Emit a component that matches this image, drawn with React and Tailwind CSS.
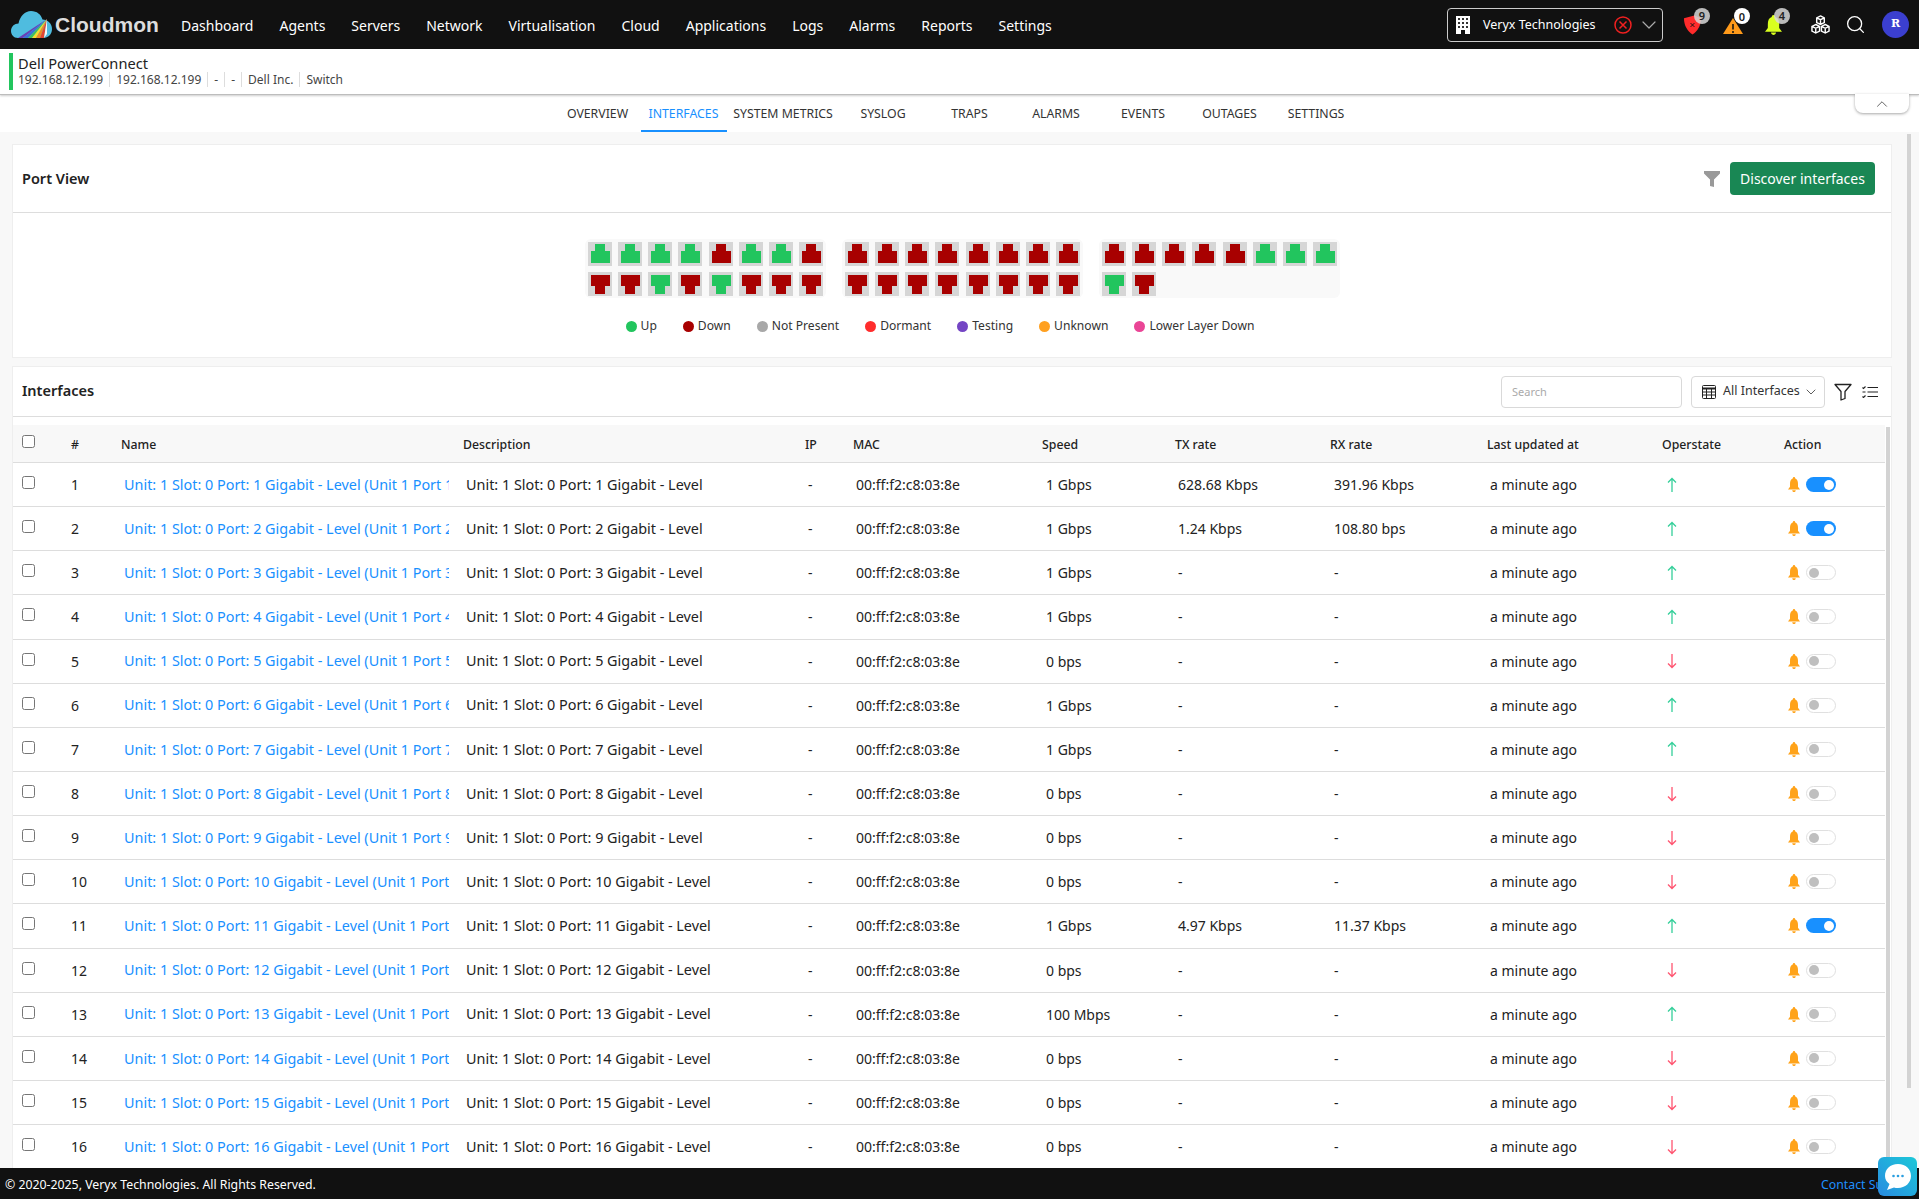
import React from "react";
import { Search, ChevronDown, ChevronUp } from "lucide-react";

const F = "font-['Noto_Sans','Liberation_Sans',sans-serif]";
const nav = ["Dashboard","Agents","Servers","Network","Virtualisation","Cloud","Applications","Logs","Alarms","Reports","Settings"];
const tabs = [["OVERVIEW","w-[86px]"],["INTERFACES","w-[86px]"],["SYSTEM METRICS","w-[113px]"],["SYSLOG","w-[87px]"],["TRAPS","w-[86px]"],["ALARMS","w-[87px]"],["EVENTS","w-[87px]"],["OUTAGES","w-[86px]"],["SETTINGS","w-[87px]"]];
const G = "#22c55e", R = "#a80000";
const up1 = [1,1,1,1,0,1,1,0], dn1 = [0,0,1,0,1,0,0,0];
const up2 = [0,0,0,0,0,0,0,0], dn2 = [0,0,0,0,0,0,0,0];
const up3 = [0,0,0,0,0,1,1,1], dn3 = [1,0];
const legend = [["Up","bg-[#22c55e]"],["Down","bg-[#a80000]"],["Not Present","bg-[#a8a8a8]"],["Dormant","bg-[#ff2d2d]"],["Testing","bg-[#7445c4]"],["Unknown","bg-[#ffa020]"],["Lower Layer Down","bg-[#ea4596]"]];
const cols = "grid grid-cols-[58px_50px_342px_342px_48px_189px_133px_155px_157px_175px_122px_101px] items-center";
const rows = [
  [1,"1 Gbps","628.68 Kbps","391.96 Kbps",1,1],[2,"1 Gbps","1.24 Kbps","108.80 bps",1,1],[3,"1 Gbps","-","-",1,0],[4,"1 Gbps","-","-",1,0],
  [5,"0 bps","-","-",0,0],[6,"1 Gbps","-","-",1,0],[7,"1 Gbps","-","-",1,0],[8,"0 bps","-","-",0,0],[9,"0 bps","-","-",0,0],[10,"0 bps","-","-",0,0],
  [11,"1 Gbps","4.97 Kbps","11.37 Kbps",1,1],[12,"0 bps","-","-",0,0],[13,"100 Mbps","-","-",1,0],[14,"0 bps","-","-",0,0],[15,"0 bps","-","-",0,0],[16,"0 bps","-","-",0,0],
];

function Port({ up, on }) {
  return (
    <div className="w-[24px] h-[24px] bg-[#d6d6d6]">
      <svg viewBox="0 0 24 24" className="w-full h-full" shapeRendering="crispEdges">
        <polygon fill={on ? G : R} points={up ? "7,2 17,2 17,9 22,9 22,21 3,21 3,9 7,9" : "3,3 22,3 22,14 17,14 17,22 7,22 7,14 3,14"} />
      </svg>
    </div>
  );
}
function Group({ top, bottom }) {
  return (
    <div className="w-[241px] h-[59px] bg-[#f9f9f9] rounded-[6px] p-[3px] flex flex-col gap-[6px]">
      <div className="flex gap-[6.2px]">{top.map((v,i)=><Port key={i} up on={v}/>)}</div>
      <div className="flex gap-[6.2px]">{bottom.map((v,i)=><Port key={i} up={false} on={v}/>)}</div>
    </div>
  );
}
function Logo() {
  return (
    <svg viewBox="0 0 41 27" className="w-[41px] h-[27px] shrink-0">
      <path d="M7 27 C2.500 27 0 23.500 0 20 C0 15.500 3.500 12.500 7.500 12.500 C9 5 14 0 20 0 C26 0 30 3.500 31.500 8.500 C36.500 8.500 41 12.500 41 18 C41 23.500 37 27 32.500 27 Z" fill="#4fbcdf"/>
      <polygon points="7,27 36,8 12,27" fill="#6a3fb5"/>
      <polygon points="12,27 36,8 17,27" fill="#3a6fd6"/>
      <polygon points="17,27 36,8 21,27" fill="#3fbf5f"/>
      <polygon points="21,27 36,8 25,27" fill="#f2e02c"/>
      <polygon points="25,27 36,8 29,27" fill="#f08a24"/>
      <polygon points="29,27 36,8 33,27" fill="#e3452f"/>
      <polygon points="33,27 36,8 36,23" fill="#f7f7f7"/>
    </svg>
  );
}
function Badge({ n, cls }) {
  return <span className={`absolute -top-[7px] -right-[8px] w-[16px] h-[16px] rounded-full flex items-center justify-center text-[11px] font-semibold text-[#222] leading-none ${cls}`}>{n}</span>;
}
function Cell({ children, cls = "" }) {
  return <div className={`pl-[3px] text-[#222] whitespace-nowrap overflow-hidden ${cls || "text-[14px]"}`}>{children}</div>;
}
function Toggle({ on }) {
  return on ? (
    <span className="w-[30px] h-[15px] rounded-full bg-[#1890ff] flex items-center justify-end pr-[2px]"><span className="w-[10px] h-[10px] rounded-full bg-white"/></span>
  ) : (
    <span className="w-[30px] h-[15px] rounded-full bg-white border border-[#e0e0e0] flex items-center pl-[2px]"><span className="w-[10px] h-[10px] rounded-full bg-[#bfbfbf]"/></span>
  );
}
function Bell({ w = 12, h = 15, color = "#ffa31a" }) {
  return (
    <svg viewBox="0 0 24 24" width={w} height={h} fill={color} preserveAspectRatio="none">
      <path d="M12 0 C13.500 0 14.500 1 14.500 2.500 C18.500 3.500 20 7 20 11 L20 15.500 L24 20 L0 20 L4 15.500 L4 11 C4 7 5.500 3.500 9.500 2.500 C9.500 1 10.500 0 12 0 Z"/>
      <path d="M8.500 21 L15.500 21 C15.500 23 13.500 24 12 24 C10.500 24 8.500 23 8.500 21 Z"/>
    </svg>
  );
}
function Arrow({ up }) {
  return (
    <svg viewBox="0 0 12 16" width="12" height="16" fill="none" stroke={up ? "#35cf9a" : "#ff5470"} strokeWidth="1.300" className="ml-[4px]">
      {up ? <path d="M6 15 V1.500 M2 5.500 L6 1.500 L10 5.500"/> : <path d="M6 1 V14.500 M2 10.500 L6 14.500 L10 10.500"/>}
    </svg>
  );
}
function Check() {
  return <input type="checkbox" className="w-[13px] h-[13px]"/>;
}

export default function App() {
  return (
    <div className={`${F} relative h-[1199px] overflow-hidden flex flex-col bg-white text-[#222]`}>
      <header className="h-[49px] shrink-0 bg-[#111111] flex items-center text-white">
        <div className="flex items-center pl-[11px] w-[181px] shrink-0 -mt-[1px]">
          <Logo/>
          <span className="font-['Liberation_Sans',sans-serif] text-[21px] font-bold text-[#dddddd] leading-none ml-[3px]">Cloudmon</span>
        </div>
        <nav className="flex gap-[26px] text-[14px] pt-[1px]">
          {nav.map(n=><span key={n}>{n}</span>)}
        </nav>
        <div className="ml-auto flex items-center pr-[10px]">
          <div className="w-[216px] h-[34px] border border-[#cccccc] rounded-[4px] flex items-center pl-[8px] pr-[1px]">
            <svg viewBox="0 0 14 18" className="w-[14px] h-[18px]"><path d="M0 0H14V18H9V14H5V18H0Z" fill="#fff"/><g fill="#333"><rect x="2" y="2" width="2" height="2"/><rect x="6" y="2" width="2" height="2"/><rect x="10" y="2" width="2" height="2"/><rect x="2" y="6" width="2" height="2"/><rect x="6" y="6" width="2" height="2"/><rect x="10" y="6" width="2" height="2"/><rect x="2" y="10" width="2" height="2"/><rect x="6" y="10" width="2" height="2"/><rect x="10" y="10" width="2" height="2"/></g></svg>
            <span className="ml-[13px] text-[12.5px] pt-[2px]">Veryx Technologies</span>
            <svg viewBox="0 0 18 18" className="w-[18px] h-[18px] ml-auto" fill="none" stroke="#f02020" strokeWidth="1.500"><circle cx="9" cy="9" r="8"/><path d="M5.500 5.500 L12.500 12.500 M12.500 5.500 L5.500 12.500"/></svg>
            <ChevronDown size={24} strokeWidth={1.200} className="text-[#aaaaaa] ml-[5px]"/>
          </div>
          <div className="relative ml-[20px] w-[19px] h-[20px]">
            <svg viewBox="0 0 20 20" className="w-[19px] h-[20px]"><path d="M1 3 L12 0 L19 3 C19 11 15 17 10 20 C5 17 1 11 1 3 Z" fill="#ff2b2b"/><path d="M8 8 L12 12 M12 8 L8 12" stroke="#111" strokeWidth="1"/></svg>
            <Badge n="9" cls="bg-[#d8d8d8]/85"/>
          </div>
          <div className="relative ml-[21px] w-[20px] h-[18px] mt-[3px]">
            <svg viewBox="0 0 20 18" className="w-[20px] h-[18px]"><path d="M10 1 L20 17 H0 Z" fill="#ff9a1a"/><path d="M10 7 V12.500 M10 14 V16" stroke="#111" strokeWidth="1.500"/></svg>
            <span className="absolute -top-[9px] -right-[7px] w-[16px] h-[16px] rounded-full flex items-center justify-center text-[11px] font-semibold text-[#222] leading-none bg-white">0</span>
          </div>
          <div className="relative ml-[22px] w-[17px] h-[20px] flex">
            <Bell w={17} h={20} color="#d9ff1f"/>
            <Badge n="4" cls="bg-[#d8d8d8]/85"/>
          </div>
          <svg viewBox="0 0 20 20" className="w-[19px] h-[19px] ml-[29px]" fill="none" stroke="#fff" strokeWidth="1.500"><path d="M10 1 L14 3 V8 L10 10 L6 8 V3 Z M6 3 L10 5 L14 3 M10 5 V10"/><path d="M5 10 L9 12 V17 L5 19 L1 17 V12 Z M1 12 L5 14 L9 12 M5 14 V19"/><path d="M15 10 L19 12 V17 L15 19 L11 17 V12 Z M11 12 L15 14 L19 12 M15 14 V19"/></svg>
          <Search size={21} strokeWidth={1.500} className="ml-[15px]"/>
          <span className="ml-[16px] w-[27px] h-[27px] rounded-full bg-[#3b3fcf] flex items-center justify-center text-[11px] font-bold font-['DejaVu_Serif',serif]">R</span>
        </div>
      </header>

      <div className="relative h-[46px] shrink-0 bg-white border-b border-[#bdbdbd] shadow-[0_1px_2px_rgba(0,0,0,0.2)] flex items-center pl-[9px] z-10">
        <span className="w-[4px] h-[37px] bg-[#22c55e]"/>
        <div className="ml-[5px] -mt-[3px]">
          <div className="text-[14.6px] leading-[18px] text-[#222]">Dell PowerConnect</div>
          <div className="flex text-[12px] leading-[15px] text-[#444]">
            <span className="pr-[6px]">192.168.12.199</span>
            <span className="px-[6px] border-l border-[#dddddd]">192.168.12.199</span>
            <span className="px-[6px] border-l border-[#dddddd]">-</span>
            <span className="px-[6px] border-l border-[#dddddd]">-</span>
            <span className="px-[6px] border-l border-[#dddddd]">Dell Inc.</span>
            <span className="px-[6px] border-l border-[#dddddd]">Switch</span>
          </div>
        </div>
        <div className="absolute right-[10px] top-[45px] w-[54px] h-[19px] bg-white rounded-b-[8px] shadow-[0_1px_3px_rgba(0,0,0,0.35)] flex items-center justify-center">
          <ChevronUp size={18} strokeWidth={1.100} className="text-[#444]"/>
        </div>
      </div>

      <div className="h-[37px] shrink-0 bg-white flex justify-center pr-[5px]">
        {tabs.map(([t,w],i)=>(
          <div key={t} className={`${w} flex items-center justify-center text-[12.3px] ${i===1 ? "pt-[3px] text-[#1890ff] border-b-2 border-[#1890ff]" : "pt-[1px] text-[#333]"}`}>{t}</div>
        ))}
      </div>

      <main className="flex-1 min-h-0 bg-[#f8f8f8] pl-[12px] pr-[27px] pt-[12px] overflow-hidden relative">
        <section className="bg-white border border-[#eeeeee] h-[214px]">
          <div className="h-[68px] border-b border-[#dddddd] flex items-center pl-[9px] pr-[16px]">
            <h2 className="text-[14.5px] font-semibold text-[#222]">Port View</h2>
            <svg viewBox="0 0 16 16" className="w-[16px] h-[16px] ml-auto"><path d="M0 0H16V2.500L10 8.500V16L6 15V8.500L0 2.500Z" fill="#999999"/></svg>
            <button className="ml-[10px] w-[145px] h-[33px] bg-[#198754] rounded-[4px] text-white text-[14px]">Discover interfaces</button>
          </div>
          <div className="flex justify-center gap-[16px] pt-[26px] pl-[21px]">
            <Group top={up1} bottom={dn1}/>
            <Group top={up2} bottom={dn2}/>
            <Group top={up3} bottom={dn3}/>
          </div>
          <div className="flex justify-center gap-[26px] pt-[19px] pr-[24px] text-[12.1px] text-[#333]">
            {legend.map(([t,c])=>(
              <span key={t} className="flex items-center gap-[4px]"><span className={`w-[11px] h-[11px] rounded-full ${c}`}/>{t}</span>
            ))}
          </div>
        </section>

        <section className="mt-[8px] bg-white border border-[#eeeeee] h-[900px] relative">
          <div className="h-[50px] border-b border-[#dddddd] flex items-center pl-[9px]">
            <h2 className="text-[14.5px] font-semibold text-[#222] -mt-[2px]">Interfaces</h2>
            <input placeholder="Search" className="ml-auto w-[181px] h-[32px] border border-[#d9d9d9] rounded-[4px] pl-[10px] text-[11px] placeholder:text-[#aaaaaa] bg-white outline-none"/>
            <div className="ml-[9px] w-[134px] h-[32px] border border-[#d9d9d9] rounded-[4px] flex items-center pl-[10px] text-[12.5px] text-[#333]">
              <svg viewBox="0 0 14 14" className="w-[14px] h-[14px] shrink-0" fill="none" stroke="#222" strokeWidth="1"><rect x="0.500" y="0.500" width="13" height="13" rx="1" /><path d="M0.500 3.500H13.500" strokeWidth="2"/><path d="M0.500 7H13.500M0.500 10H13.500M4.500 3V13.500M9.500 3V13.500"/></svg>
              <span className="ml-[7px] whitespace-nowrap">All Interfaces</span>
              <ChevronDown size={16} strokeWidth={1.200} className="ml-[3px] shrink-0"/>
            </div>
            <svg viewBox="0 0 18 18" className="w-[18px] h-[18px] ml-[9px]" fill="none" stroke="#222" strokeWidth="1.300"><path d="M1 1.500H17L11 8.500V15.500L7 17V8.500Z" strokeLinejoin="round"/></svg>
            <svg viewBox="0 0 16 12" className="w-[16px] h-[12px] ml-[10px] mr-[13px]" fill="none" stroke="#222" strokeWidth="1.100"><path d="M5.500 1.500H16M5.500 6H16M5.500 10.500H16"/><path d="M0.500 1.500L1.500 2.500L3.500 0.500M0.500 6H3.500M0.500 10.500L1.500 11.500L3.500 9.500"/></svg>
          </div>
          <div className="mt-[8px] w-[1872px]">
            <div className={`${cols} h-[38px] bg-[#f8f8f8] border-b border-[#dddddd] text-[12.3px] font-medium text-[#222]`}>
              <div className="pl-[9px] flex items-center -mt-[5px]"><Check/></div>
              {["#","Name","Description","IP","MAC","Speed","TX rate","RX rate","Last updated at","Operstate","Action"].map(h=><div key={h} className="pt-[3px]">{h}</div>)}
            </div>
            {rows.map(([n,s,tx,rx,up,on])=>(
              <div key={n} className={`${cols} h-[44.15px] border-b border-[#dddddd]`}>
                <div className="pl-[9px] flex items-center -mt-[4px]"><Check/></div>
                <div className="text-[14px] text-[#222]">{n}</div>
                <Cell cls="text-[14.4px] text-[#1890ff]! w-[328px]">{`Unit: 1 Slot: 0 Port: ${n} Gigabit - Level (Unit 1 Port ${n})`}</Cell>
                <Cell cls="text-[14.4px]">{`Unit: 1 Slot: 0 Port: ${n} Gigabit - Level`}</Cell>
                <Cell>-</Cell>
                <Cell>00:ff:f2:c8:03:8e</Cell>
                <Cell cls="text-[14px] pl-[4px]!">{s}</Cell>
                <Cell>{tx}</Cell>
                <Cell cls="text-[14px] pl-[4px]!">{rx}</Cell>
                <Cell>a minute ago</Cell>
                <div className="flex items-center"><Arrow up={up}/></div>
                <div className="flex items-center pl-[4px] gap-[6px]"><Bell/><Toggle on={on}/></div>
              </div>
            ))}
          </div>
          <div className="absolute left-[1873px] top-[60px] bottom-0 w-[4px] bg-[#d3d3d3]"/>
        </section>
        <div className="absolute right-[8px] top-[2px] w-[4px] h-[954px] bg-[#d3d3d3]"/>
      </main>

      <footer className="h-[31px] shrink-0 bg-[#111111] flex items-center pl-[5px] pr-[2px] pt-[3px] text-white text-[12.3px] overflow-hidden relative z-10">
        <span>© 2020-2025, Veryx Technologies. All Rights Reserved.</span>
        <span className="absolute left-[1821px] text-[#1f8fff] whitespace-nowrap">Contact Support</span>
      </footer>

      <div className="absolute left-[1878px] top-[1157px] z-20 w-[39px] h-[39px] rounded-[6px] bg-gradient-to-tr from-[#2a8be0] to-[#1cc8d8] flex items-center justify-center">
        <svg viewBox="0 0 28 28" className="w-[28px] h-[28px]"><path d="M14 1 C22 1 27 6 27 13 C27 20 21 25 14 25 C12.500 25 11 24.800 10 24.400 L3 27 L5.500 21 C2.500 19 1 16 1 13 C1 6 6 1 14 1 Z" fill="#fff"/><circle cx="9.500" cy="13" r="1.300" fill="#2a9fe0"/><circle cx="14" cy="13" r="1.300" fill="#2a9fe0"/><circle cx="18.500" cy="13" r="1.300" fill="#2a9fe0"/></svg>
      </div>
    </div>
  );
}
